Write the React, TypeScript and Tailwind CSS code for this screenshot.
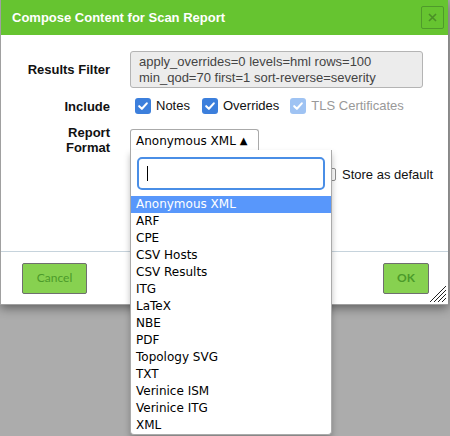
import { useState } from "react";

const FORMATS = [
  "Anonymous XML",
  "ARF",
  "CPE",
  "CSV Hosts",
  "CSV Results",
  "ITG",
  "LaTeX",
  "NBE",
  "PDF",
  "Topology SVG",
  "TXT",
  "Verinice ISM",
  "Verinice ITG",
  "XML",
];

const SANS = "font-['Liberation_Sans',Arial,sans-serif]";

function CheckBox({ disabled = false }: { disabled?: boolean }) {
  return (
    <span
      className={
        "flex items-center justify-center w-4 h-4 rounded-[3px] shrink-0 " +
        (disabled ? "bg-[#9fc3f3]" : "bg-[#3c7fdc]")
      }
    >
      <svg width="12" height="12" viewBox="0 0 12 12" fill="none">
        <path d="M2.2 6.2 L4.9 8.8 L9.8 3.4" stroke="white" strokeWidth="2.1" strokeLinecap="round" strokeLinejoin="round" />
      </svg>
    </span>
  );
}

function Label({ children }: { children: React.ReactNode }) {
  return (
    <div className="w-[109px] shrink-0 text-right font-bold text-[13px] leading-[15px] text-[#111]">
      {children}
    </div>
  );
}

export default function App() {
  const [selected] = useState("Anonymous XML");

  return (
    <div className={`relative w-[450px] h-[436px] bg-[#acacac] overflow-hidden ${SANS}`}>
      {/* Dialog */}
      <div className="w-[448px] h-[305px] bg-white border-l border-b border-[#a0a0a0] flex flex-col shadow-[0_3px_10px_rgba(0,0,0,0.45)]">
        <div className="h-[35px] bg-[#66c430] flex items-center justify-between pl-[11px] pr-[4px] shrink-0">
          <span className="text-white font-bold text-[13px]">Compose Content for Scan Report</span>
          <button className="w-[23px] h-[23px] border border-[#4f9a2b] rounded-[2px] flex items-center justify-center">
            <svg width="9" height="9" viewBox="0 0 9 9">
              <path d="M1 1 L8 8 M8 1 L1 8" stroke="#4a8f27" strokeWidth="1.6" />
            </svg>
          </button>
        </div>

        <div className="flex-1 flex flex-col pt-[16px]">
          <div className="flex items-center gap-[20px]">
            <Label>Results Filter</Label>
            <div className="w-[293px] h-[37px] bg-[#ececec] border border-[#b4b4b4] rounded-[3px] pl-[8px] pt-[2px] text-[13px] leading-[16px] text-[#444]">
              apply_overrides=0 levels=hml rows=100
              <br />
              min_qod=70 first=1 sort-reverse=severity
            </div>
          </div>

          <div className="flex items-center gap-[20px] mt-[10px] h-[16px]">
            <Label>Include</Label>
            <div className="flex items-center text-[13px] pl-[5px]">
              <CheckBox />
              <span className="ml-[5px] text-[#111]">Notes</span>
              <span className="ml-[12px]"><CheckBox /></span>
              <span className="ml-[5px] text-[#111]">Overrides</span>
              <span className="ml-[11px]"><CheckBox disabled /></span>
              <span className="ml-[5px] text-[#999]">TLS Certificates</span>
            </div>
          </div>

          <div className="flex items-start gap-[20px] mt-[11px]">
            <Label>
              Report
              <br />
              Format
            </Label>
            <div className="flex flex-col">
              <div className="mt-[4px] h-[22px] w-[129px] border border-b-0 border-[#aaa] rounded-t-[3px] flex items-center pl-[5px] text-[12px] text-black font-['DejaVu_Sans',sans-serif]">
                {selected} <span className="ml-[4px] text-[10px]">▲</span>
              </div>
              <div className="flex items-center mt-[14px] ml-[193px] text-[13px] text-[#111]">
                <span className="w-[13px] h-[13px] border border-[#8f8f8f] rounded-[2px] bg-white" />
                <span className="ml-[6px]">Store as default</span>
              </div>
            </div>
          </div>
        </div>

        <div className="h-[53px] border-t border-[#c6d3dc] flex items-center justify-between pl-[21px] pr-[19px] shrink-0 relative">
          <button className="h-[31px] w-[65px] bg-[#87d150] border border-[#6f6f6f] rounded-[2px] text-[#4c9a2a] text-[12px] font-['Lato',sans-serif]">
            Cancel
          </button>
          <button className="h-[31px] w-[46px] bg-[#87d150] border border-[#6f6f6f] rounded-[2px] text-[#4c9a2a] text-[12px] font-bold font-['Lato',sans-serif]">
            OK
          </button>
          <svg className="absolute right-[1px] bottom-[1px]" width="19" height="19" viewBox="0 0 19 19">
            <path d="M18 2 L2 18 M18 6 L6 18 M18 10 L10 18 M18 14 L14 18" stroke="#222" strokeWidth="1" />
          </svg>
        </div>
      </div>

      {/* Open dropdown menu */}
      <div className="absolute left-[130px] top-[150px] w-[202px] bg-white border border-t-0 border-[#aaa] rounded-b-[4px] shadow-[0_4px_6px_rgba(0,0,0,0.25)] font-['DejaVu_Sans',sans-serif]">
        <div className="px-[6px] pt-[7px] pb-[6px]">
          <div className="h-[33px] border-2 border-[#4a8ee6] rounded-[5px] flex items-center pl-[8px]">
            <span className="w-px h-[15px] bg-black" />
          </div>
        </div>
        <ul>
          {FORMATS.map((f) => (
            <li
              key={f}
              className={
                "h-[17px] leading-[17px] pl-[5px] text-[12px] " +
                (f === selected ? "bg-[#5897fb] text-white" : "text-black")
              }
            >
              {f}
            </li>
          ))}
        </ul>
      </div>
    </div>
  );
}
